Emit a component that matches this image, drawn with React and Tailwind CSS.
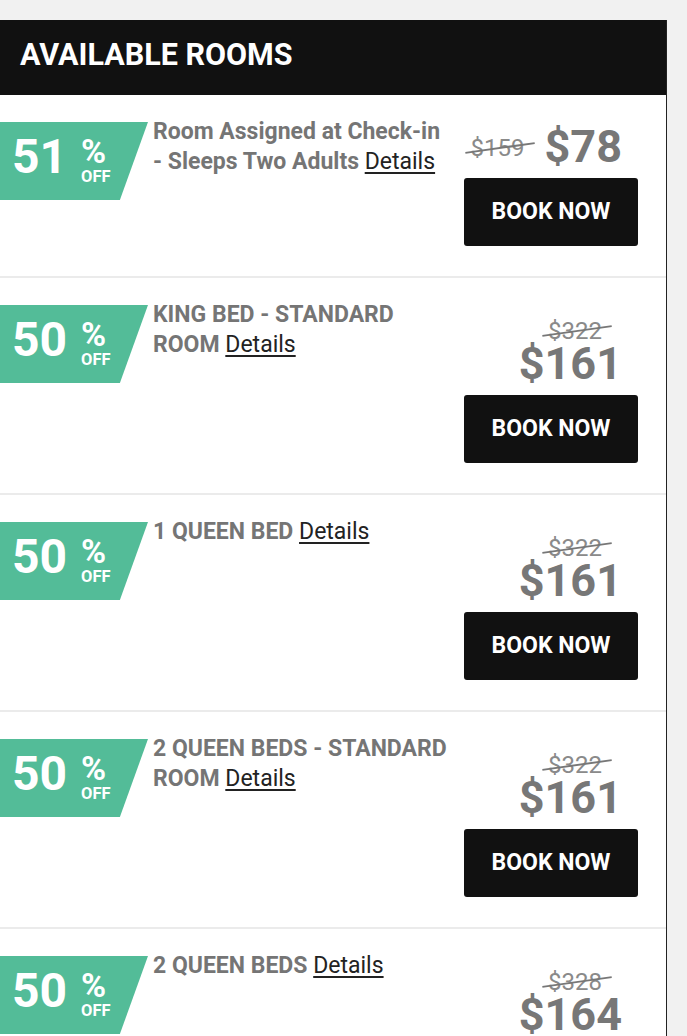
import React from "react";

const rooms = [
  { off: 51, title: "Room Assigned at Check-in - Sleeps Two Adults", was: "$159", now: "$78" },
  { off: 50, title: "KING BED - STANDARD ROOM", was: "$322", now: "$161" },
  { off: 50, title: "1 QUEEN BED", was: "$322", now: "$161" },
  { off: 50, title: "2 QUEEN BEDS - STANDARD ROOM", was: "$322", now: "$161" },
  { off: 50, title: "2 QUEEN BEDS", was: "$328", now: "$164" },
];

function Badge({ off }) {
  return (
    <div className="mt-[6px] h-[78px] w-[148px] flex-none bg-[#53bc98] [clip-path:polygon(0_0,100%_0,81%_100%,0_100%)] flex items-start pl-[12px] text-white font-bold">
      <span className="pt-[11px] text-[48px] leading-[48px]">{off}</span>
      <span className="ml-[14px] flex flex-col items-start">
        <span className="pt-[14px] text-[34px] leading-[31px]">%</span>
        <span className="mt-[2px] text-[16.5px] leading-[16px]">OFF</span>
      </span>
    </div>
  );
}

function Row({ room }) {
  return (
    <div className="flex border-b-2 border-[#ebebeb] pt-[21px] pb-[30px]">
      <Badge off={room.off} />
      <div className="flex-1 pl-[5px] pr-[15px] pt-[1px]">
        <p className="text-[23px] leading-[30px] font-bold text-[#757575]">
          {room.title}{" "}
          <a href="#" className="font-normal text-[#222] underline underline-offset-[3px]">Details</a>
        </p>
      </div>
      <div className="mt-[6px] mr-[28px] w-[174px] flex-none">
        <div className="flex flex-wrap items-baseline justify-end pr-4">
          <span className="relative -top-[6px] mr-[20px] pt-[24px] text-[24px] leading-[16px] text-[#8a8a8a]">
            {room.was}
            <span className="absolute left-[-6px] right-[-10px] top-[31px] h-[1.5px] bg-[#777] -rotate-[8deg]"></span>
          </span>
          <span className="text-[45px] leading-[38px] font-bold text-[#777]">{room.now}</span>
        </div>
        <button className="mt-3 flex h-[68px] w-[174px] items-center justify-center rounded-[3px] bg-[#111] text-[23px] font-bold text-white">
          BOOK NOW
        </button>
      </div>
    </div>
  );
}

export default function App() {
  return (
    <div className="min-h-screen bg-[#f1f1f1] pt-5 font-['Roboto',_sans-serif]">
      <div className="w-[667px] border-r border-[#222] bg-white">
        <div className="h-[75px] bg-[#111] px-5 pt-[20px]">
          <h2 className="text-[30.5px] leading-[30px] font-bold text-white">AVAILABLE ROOMS</h2>
        </div>
        {rooms.map((r, i) => (
          <Row key={i} room={r} />
        ))}
      </div>
    </div>
  );
}
